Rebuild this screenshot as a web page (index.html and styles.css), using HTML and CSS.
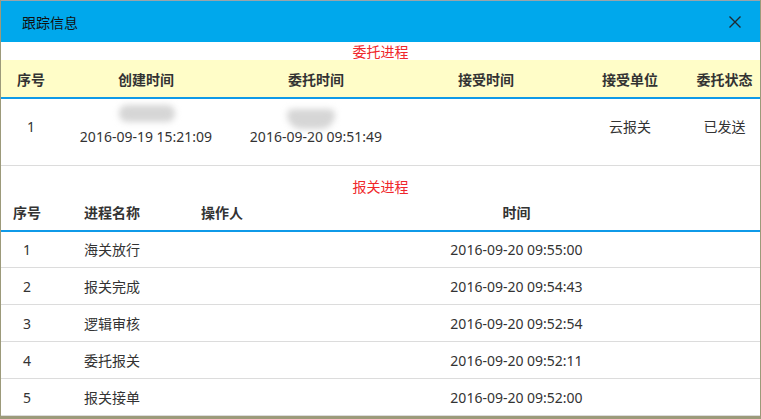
FILE: index.html
```html
<!DOCTYPE html>
<html lang="zh-CN">
<head>
  <meta charset="UTF-8" />
  <title>跟踪信息</title>
  <link rel="stylesheet" href="styles.css">
</head>
<body>

  <div class="dialog">
    <div class="dialog-head">
      <span class="dialog-title">跟踪信息</span>
      <span class="dialog-close">
        <svg width="14" height="14" viewBox="0 0 14 14"><path d="M1.5 1.5 L12.5 12.5 M12.5 1.5 L1.5 12.5" stroke="#1d2a33" stroke-width="1.4"/></svg>
      </span>
    </div>

    <!-- 委托进程 -->
    <div class="section-title">委托进程</div>
    <table class="grid grid-entrust">
      <colgroup>
        <col style="width:60px"><col style="width:170px"><col style="width:170px">
        <col style="width:170px"><col style="width:118px"><col>
      </colgroup>
      <thead>
        <tr>
          <th>序号</th><th>创建时间</th><th>委托时间</th><th>接受时间</th><th>接受单位</th><th>委托状态</th>
        </tr>
      </thead>
      <tbody>
        <tr>
          <td class="top">1</td>
          <td class="bottom"><span class="smudge smudge-a"></span>2016-09-19 15:21:09</td>
          <td class="bottom"><span class="smudge smudge-b"></span>2016-09-20 09:51:49</td>
          <td></td>
          <td class="top">云报关</td>
          <td class="top">已发送</td>
        </tr>
      </tbody>
    </table>

    <!-- 报关进程 -->
    <div class="section-title second">报关进程</div>
    <table class="grid grid-customs">
      <colgroup>
        <col style="width:52px"><col style="width:118px"><col style="width:102px"><col>
      </colgroup>
      <thead>
        <tr><th>序号</th><th>进程名称</th><th>操作人</th><th>时间</th></tr>
      </thead>
      <tbody>
        <tr><td>1</td><td>海关放行</td><td></td><td>2016-09-20 09:55:00</td></tr>
        <tr><td>2</td><td>报关完成</td><td></td><td>2016-09-20 09:54:43</td></tr>
        <tr><td>3</td><td>逻辑审核</td><td></td><td>2016-09-20 09:52:54</td></tr>
        <tr><td>4</td><td>委托报关</td><td></td><td>2016-09-20 09:52:11</td></tr>
        <tr><td>5</td><td>报关接单</td><td></td><td>2016-09-20 09:52:00</td></tr>
      </tbody>
    </table>
  </div>

</body>
</html>
```

FILE: styles.css
```css
body {
  margin: 0;
  padding: 0;
  background: #9c9a7a;
  font-family: "Segoe UI", "Noto Sans", "Noto Sans CJK SC", sans-serif;
  font-size: 14px;
  color: #333;
  overflow: hidden;
}

.dialog {
  margin-left: 1px;
  width: 759px;
  height: 415px;
  background: #fff;
  border-top: 1px solid #9aa4aa;
  overflow: hidden;
}

.dialog-head {
  height: 41px;
  background: #00a8ec;
  display: flex;
  align-items: center;
  justify-content: space-between;
  padding: 0 18px 0 21px;
}

.dialog-title {
  font-family: "Noto Sans CJK SC", sans-serif;
  font-size: 14px;
  color: #111;
}

.dialog-close {
  display: flex;
}

.section-title {
  height: 18px;
  line-height: 18px;
  text-align: center;
  color: #f0272b;
  font-family: "Noto Sans CJK SC", sans-serif;
  font-size: 14px;
}

.section-title.second {
  margin-top: 11px;
}

.grid {
  width: 100%;
  border-collapse: collapse;
  table-layout: fixed;
}

.grid th {
  font-family: "Noto Sans CJK SC", sans-serif;
  font-weight: bold;
  font-size: 14px;
  color: #333;
  text-align: center;
  padding: 0;
  border-bottom: 2px solid #0f9ae8;
}

.grid td {
  text-align: center;
  padding: 0;
  font-family: "Segoe UI", "Noto Sans", "Noto Sans CJK SC", sans-serif;
  font-size: 14px;
  color: #333;
}

.grid-entrust th {
  height: 37px;
  background: #fffdc8;
}

.grid-entrust tbody tr {
  height: 67px;
}

.grid-entrust td {
  border-bottom: 1px solid #dcdcdc;
  position: relative;
  vertical-align: top;
  line-height: 18px;
}

.grid-entrust td.top {
  padding-top: 19px;
}

.grid-entrust td.bottom {
  padding-top: 29px;
}

.smudge {
  position: absolute;
  background: #d6d6d6;
  filter: blur(3px);
  border-radius: 8px;
}

.smudge-a {
  left: 58px;
  top: 6px;
  width: 56px;
  height: 17px;
}

.smudge-b {
  left: 56px;
  top: 10px;
  width: 48px;
  height: 20px;
  border-radius: 6px 6px 16px 16px;
}

.grid-customs th {
  height: 35px;
}

.grid-customs tbody tr {
  height: 37px;
}

.grid-customs td {
  border-bottom: 1px solid #dcdcdc;
}

.grid-customs td:nth-child(2) {
  font-family: "Noto Sans CJK SC", sans-serif;
}
```
